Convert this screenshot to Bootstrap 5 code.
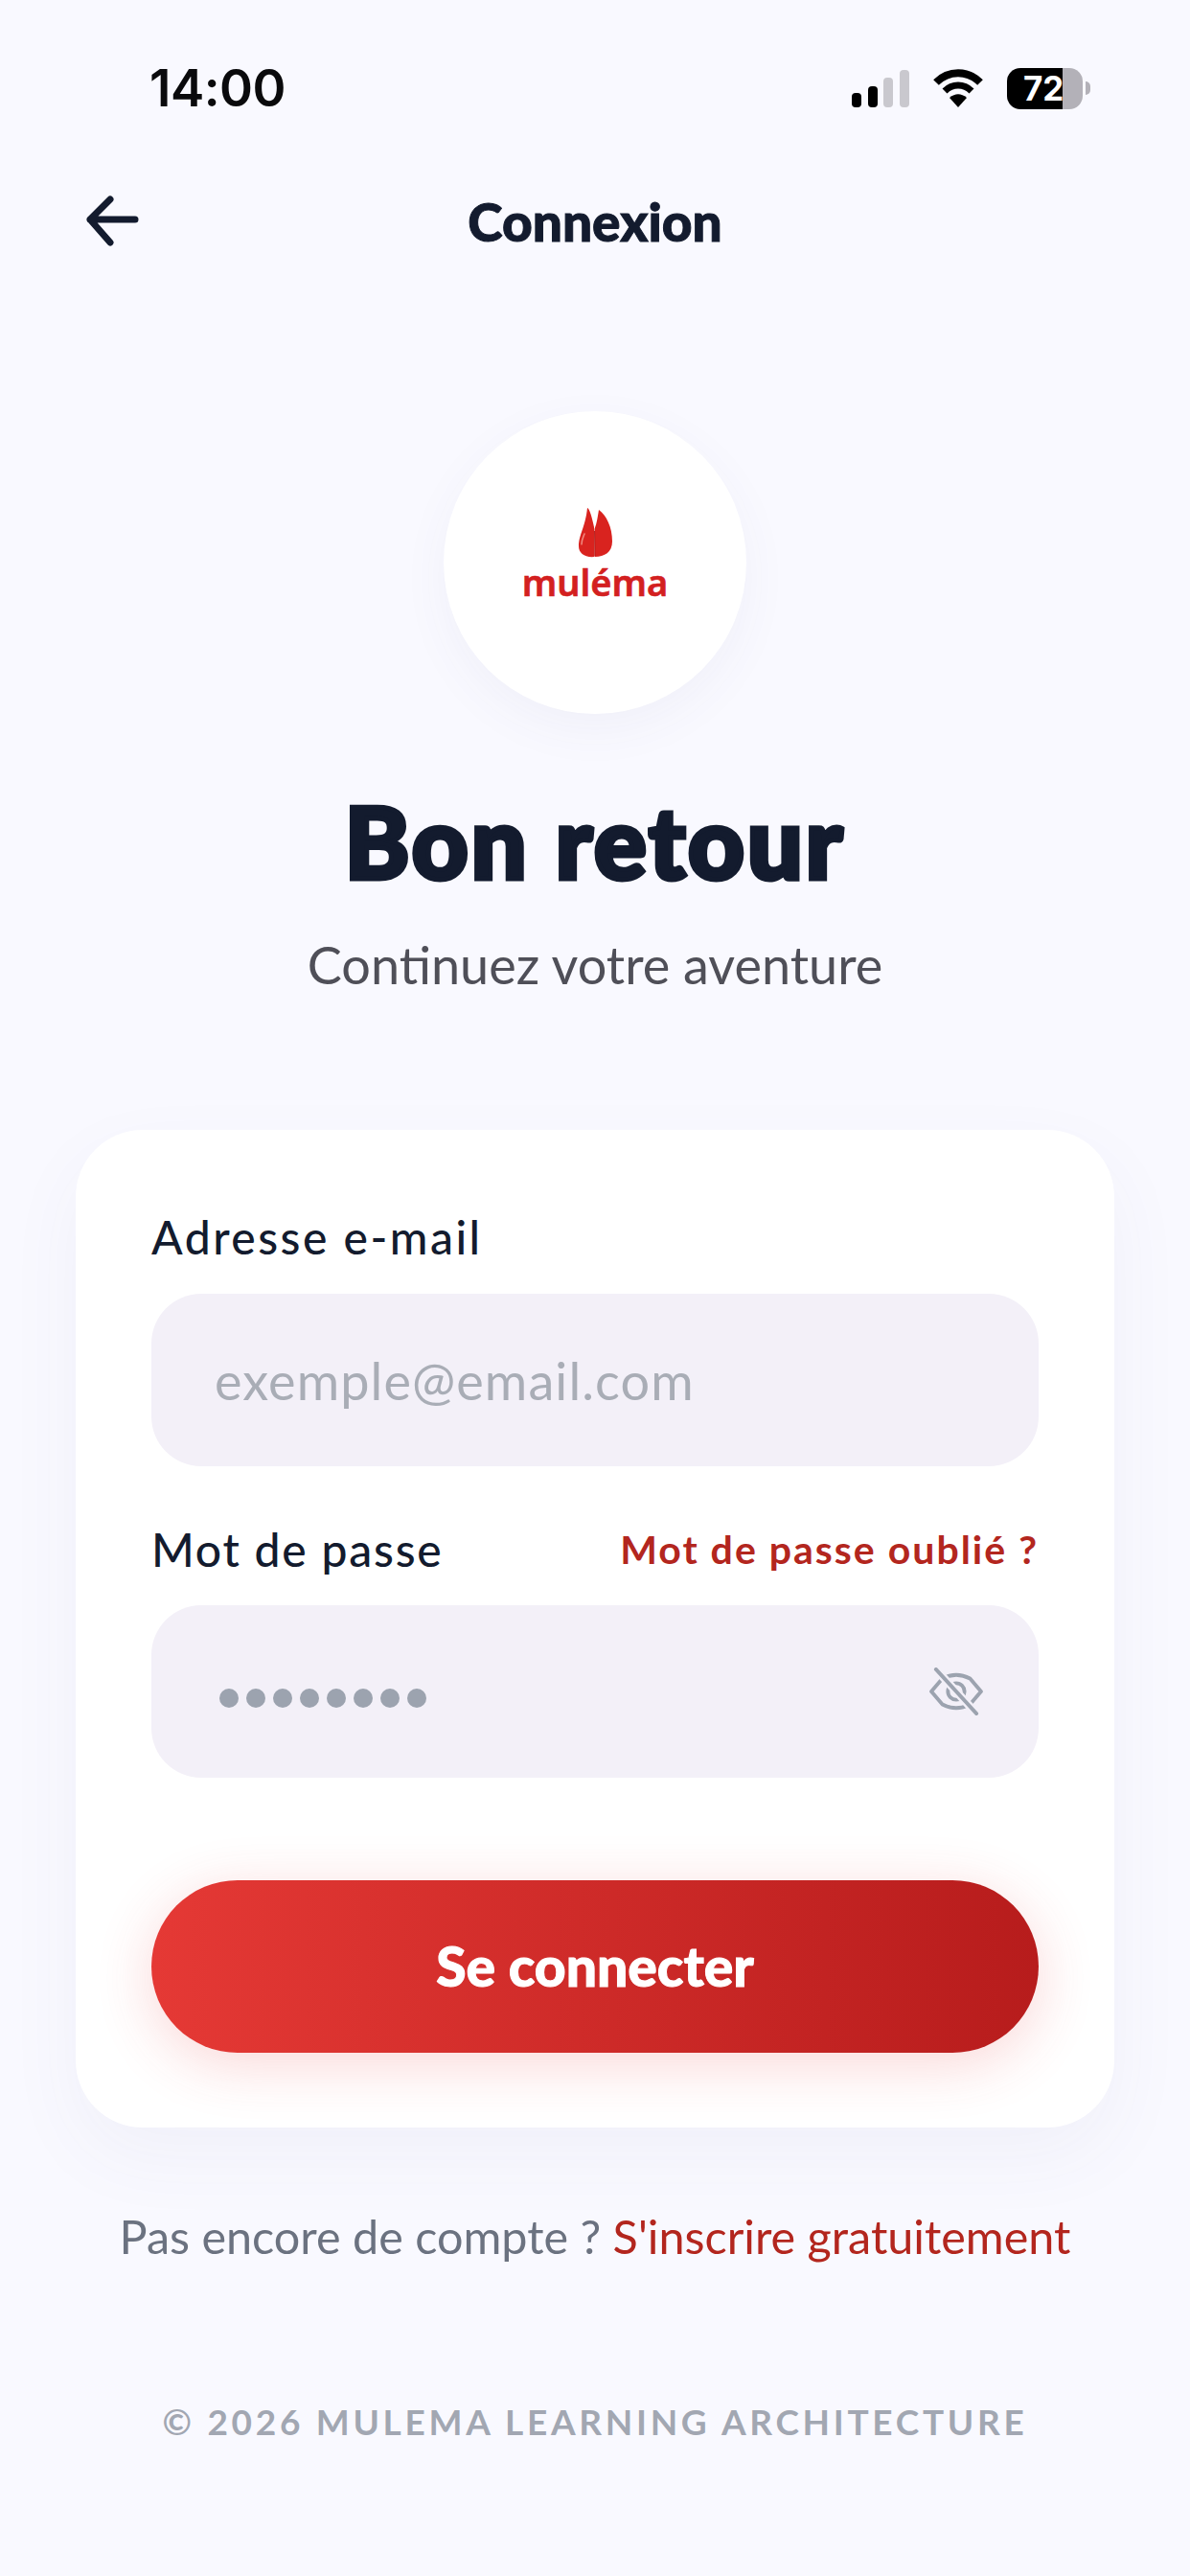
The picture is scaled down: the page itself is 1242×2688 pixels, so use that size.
<!DOCTYPE html>
<html lang="fr">
<head>
  <meta charset="UTF-8">
  <meta name="viewport" content="width=device-width, initial-scale=1.0">
  <title>Connexion</title>
  <link href="https://cdn.jsdelivr.net/npm/bootstrap@5.3.0/dist/css/bootstrap.min.css" rel="stylesheet">
  <style>
    body {
      background-color: #f9f9ff;
      color: #131b2e;
      font-family: "Lato", "Noto Sans", sans-serif;
      width: 1242px;
      height: 2688px;
      overflow: hidden;
    }
    .status-row {
      height: 92px;
      margin-top: 46px;
      padding: 0 104px 0 156px;
    }
    .status-time {
      font-family: "Inter", sans-serif;
      font-size: 53px;
      font-weight: 600;
      color: #0a0a0c;
      line-height: 92px;
      letter-spacing: -0.5px;
    }
    .status-gap {
      margin-right: 24px;
    }
    .batt {
      width: 79px;
      height: 43px;
      border-radius: 14px;
      background: linear-gradient(90deg, #000 0 73%, #b3b1b8 73% 100%);
      color: #fff;
      font-family: "Inter", sans-serif;
      font-size: 35px;
      font-weight: 700;
      line-height: 43px;
      padding-left: 17px;
    }
    .batt-tip {
      width: 5px;
      height: 14px;
      border-radius: 0 8px 8px 0;
      background: #b3b1b8;
      margin-left: 3px;
    }
    .top-row {
      height: 92px;
      margin-top: 48px;
      padding: 0 84px;
    }
    .top-title {
      font-size: 55px;
      font-weight: 900;
      line-height: 90px;
      -webkit-text-stroke: 1px #131b2e;
    }
    .back-btn {
      left: 84px;
      top: 0;
      height: 92px;
    }
    .logo-disc {
      width: 316px;
      height: 316px;
      margin-top: 151px;
      padding-bottom: 18px;
      background: #fff;
      box-shadow: 0 16px 50px rgba(70, 70, 130, 0.05);
    }
    .logo-word {
      font-family: "Noto Sans", sans-serif;
      font-size: 38px;
      font-weight: 600;
      line-height: 40px;
      color: #d3201f;
      margin-top: 5px;
      -webkit-text-stroke: 0.6px #d3201f;
    }
    .hero-title {
      font-size: 102px;
      font-weight: 900;
      line-height: 110px;
      margin-top: 78px;
      margin-bottom: 0;
      -webkit-text-stroke: 5px #131b2e;
      letter-spacing: 3px;
    }
    .hero-sub {
      font-size: 54px;
      line-height: 70px;
      color: #4f4f58;
      margin-top: 39px;
      margin-bottom: 0;
    }
    .login-card {
      width: 1084px;
      height: 1041px;
      margin: 137px auto 0;
      padding: 82px 79px 0;
      background: #fff;
      border: 0;
      border-radius: 70px;
      box-shadow: 0 30px 80px rgba(70, 70, 130, 0.05);
    }
    .field-label {
      font-size: 48px;
      font-weight: 500;
      line-height: 60px;
      letter-spacing: 2.5px;
      margin: 0;
    }
    .mail-label {
      margin-bottom: 29px;
    }
    .pass-head {
      margin-top: 56px;
      margin-bottom: 27px;
    }
    .pass-head .field-label {
      letter-spacing: 1.8px;
    }
    .field-box {
      height: 180px;
      border-radius: 52px;
      background: #f3f0f8;
      padding: 0 56px 0 66px;
      border: 0;
      font-size: 54px;
      letter-spacing: 1.1px;
      color: #a9adb6;
    }
    .forgot-link {
      font-size: 41px;
      font-weight: 700;
      color: #b3261e;
      text-decoration: none;
      letter-spacing: 2px;
    }
    .pw-dots {
      gap: 8px;
      margin-top: 14px;
      margin-left: 5px;
    }
    .pw-dots span {
      width: 20px;
      height: 20px;
      border-radius: 50%;
      background: #9ca3af;
    }
    .login-btn {
      height: 180px;
      margin-top: 107px;
      border: 0;
      border-radius: 90px;
      background: linear-gradient(90deg, #e53935, #b71c1c);
      color: #fff;
      font-size: 57px;
      font-weight: 900;
      -webkit-text-stroke: 1px #fff;
      box-shadow: 0 12px 60px rgba(229, 57, 53, 0.2);
    }
    .signup-line {
      font-size: 48.5px;
      line-height: 64px;
      color: #6b7280;
      margin-top: 81px;
      margin-bottom: 0;
    }
    .signup-line a {
      color: #b3261e;
      text-decoration: none;
    }
    .foot-line {
      font-size: 37px;
      font-weight: 700;
      line-height: 50px;
      color: #a2a7b2;
      letter-spacing: 3.7px;
      margin-top: 137px;
      margin-bottom: 0;
    }
  </style>
</head>
<body>

<div class="status-row d-flex justify-content-between align-items-center">
  <span class="status-time">14:00</span>
  <div class="d-flex align-items-center">
    <svg class="status-gap" width="60" height="40" viewBox="0 0 60 40">
      <rect x="0" y="25" width="10" height="15" rx="4" fill="#000"/>
      <rect x="17" y="18" width="10" height="22" rx="4" fill="#000"/>
      <rect x="33" y="9" width="10" height="31" rx="4" fill="#c9c8ce"/>
      <rect x="50" y="1" width="10" height="39" rx="4" fill="#c9c8ce"/>
    </svg>
    <svg class="status-gap" width="54" height="42" viewBox="0 0 54 42">
      <path d="M4 15 C17 2 37 2 50 15" fill="none" stroke="#000" stroke-width="8"/>
      <path d="M13 24 C21 16 33 16 41 24" fill="none" stroke="#000" stroke-width="7"/>
      <path d="M18 31 C24 26 30 26 36 31 L27 41 Z" fill="#000"/>
    </svg>
    <div class="batt">72</div>
    <div class="batt-tip"></div>
  </div>
</div>

<div class="top-row position-relative text-center">
  <svg class="back-btn position-absolute" width="62" height="92" viewBox="0 0 62 92">
    <path d="M57 43 H10 M31 22 L10 43 L31 67" fill="none" stroke="#131b2e" stroke-width="7" stroke-linecap="round" stroke-linejoin="round"/>
  </svg>
  <span class="top-title">Connexion</span>
</div>

<div class="logo-disc rounded-circle mx-auto d-flex flex-column align-items-center justify-content-center">
  <svg width="36" height="52" viewBox="0 0 36 52">
    <path d="M10 0 C12 0 15 10 17 20 L17.6 51 C7 52 1 47 1 40 C1 28 8 20 10 0 Z" fill="#d9231f"/>
    <path d="M22 2 C30 8 36 20 36 35 C36 46 28 51 18 51 L17.5 22 C20 16 21 8 22 2 Z" fill="#d9231f"/>
    <path d="M17.6 24 L18 50" stroke="#b01a18" stroke-width="1"/>
    <path d="M4 38 C4 33 6 30 7 27" fill="none" stroke="#f08a80" stroke-width="1.5" stroke-linecap="round"/>
  </svg>
  <div class="logo-word">muléma</div>
</div>

<div class="text-center">
  <h1 class="hero-title">Bon retour</h1>
  <p class="hero-sub">Continuez votre aventure</p>
</div>

<div class="card login-card">
  <label class="field-label mail-label">Adresse e-mail</label>
  <div class="field-box d-flex align-items-center">exemple@email.com</div>
  <div class="pass-head d-flex justify-content-between align-items-center">
    <label class="field-label">Mot de passe</label>
    <a href="#" class="forgot-link">Mot de passe oublié ?</a>
  </div>
  <div class="field-box d-flex align-items-center justify-content-between">
    <div class="pw-dots d-flex">
      <span></span><span></span><span></span><span></span><span></span><span></span><span></span><span></span>
    </div>
    <svg width="60" height="50" viewBox="0 0 60 52">
      <path d="M3 26 L15 12 Q30 4 45 12 L57 26 L45 40 Q30 48 15 40 Z" fill="none" stroke="#9ca3af" stroke-width="4" stroke-linejoin="round"/>
      <circle cx="30" cy="26" r="9" fill="none" stroke="#9ca3af" stroke-width="4"/>
      <path d="M8 2 L52 50" stroke="#f3f0f8" stroke-width="9"/>
      <path d="M8 2 L52 50" stroke="#9ca3af" stroke-width="4" stroke-linecap="round"/>
    </svg>
  </div>
  <button type="button" class="btn login-btn w-100">Se connecter</button>
</div>

<div class="text-center">
  <p class="signup-line">Pas encore de compte ? <a href="#">S'inscrire gratuitement</a></p>
  <p class="foot-line">© 2026 MULEMA LEARNING ARCHITECTURE</p>
</div>

<script src="https://cdn.jsdelivr.net/npm/bootstrap@5.3.0/dist/js/bootstrap.bundle.min.js"></script>
</body>
</html>
